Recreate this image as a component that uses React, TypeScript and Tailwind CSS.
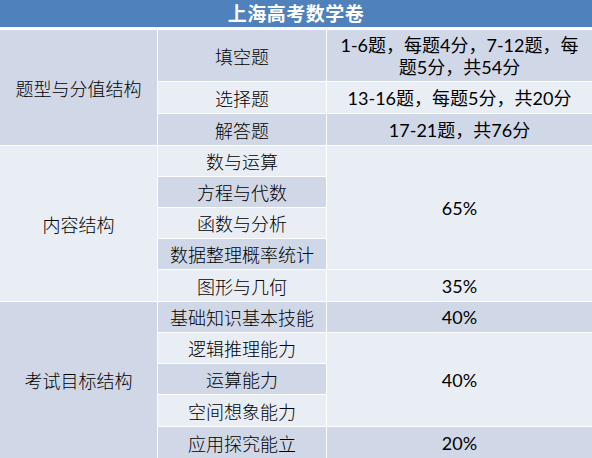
const DARK = 'bg-[#d0d8e8]'
const LIGHT = 'bg-[#e9edf4]'

type Cell = {
  text: React.ReactNode
  place: string
  bg: string
  mixed?: boolean
}

const cells: Cell[] = [
  // 题型与分值结构
  { text: '题型与分值结构', place: 'col-start-1 row-start-1 row-span-3', bg: DARK },
  { text: '填空题', place: 'col-start-2 row-start-1', bg: DARK },
  {
    text: (
      <>
        1-6题，每题4分，7-12题，每
        <br />
        题5分，共54分
      </>
    ),
    place: 'col-start-3 row-start-1',
    bg: DARK,
    mixed: true,
  },
  { text: '选择题', place: 'col-start-2 row-start-2', bg: LIGHT },
  { text: '13-16题，每题5分，共20分', place: 'col-start-3 row-start-2', bg: LIGHT, mixed: true },
  { text: '解答题', place: 'col-start-2 row-start-3', bg: DARK },
  { text: '17-21题，共76分', place: 'col-start-3 row-start-3', bg: DARK, mixed: true },

  // 内容结构
  { text: '内容结构', place: 'col-start-1 row-start-4 row-span-5', bg: LIGHT },
  { text: '数与运算', place: 'col-start-2 row-start-4', bg: LIGHT },
  { text: '65%', place: 'col-start-3 row-start-4 row-span-4', bg: LIGHT, mixed: true },
  { text: '方程与代数', place: 'col-start-2 row-start-5', bg: DARK },
  { text: '函数与分析', place: 'col-start-2 row-start-6', bg: LIGHT },
  { text: '数据整理概率统计', place: 'col-start-2 row-start-7', bg: DARK },
  { text: '图形与几何', place: 'col-start-2 row-start-8', bg: LIGHT },
  { text: '35%', place: 'col-start-3 row-start-8', bg: LIGHT, mixed: true },

  // 考试目标结构
  { text: '考试目标结构', place: 'col-start-1 row-start-9 row-span-5', bg: DARK },
  { text: '基础知识基本技能', place: 'col-start-2 row-start-9', bg: DARK },
  { text: '40%', place: 'col-start-3 row-start-9', bg: DARK, mixed: true },
  { text: '逻辑推理能力', place: 'col-start-2 row-start-10', bg: LIGHT },
  { text: '40%', place: 'col-start-3 row-start-10 row-span-3', bg: LIGHT, mixed: true },
  { text: '运算能力', place: 'col-start-2 row-start-11', bg: DARK },
  { text: '空间想象能力', place: 'col-start-2 row-start-12', bg: LIGHT },
  { text: '应用探究能立', place: 'col-start-2 row-start-13', bg: DARK },
  { text: '20%', place: 'col-start-3 row-start-13', bg: DARK, mixed: true },
]

export default function App() {
  return (
    <div className="w-[592px] h-[458px] bg-white flex flex-col overflow-hidden">
      <div className="h-[27px] bg-[#4f81bd] flex items-center justify-center text-white text-[19px] font-bold font-['Noto_Sans_CJK_SC',sans-serif] tracking-[0.5px]">
        上海高考数学卷
      </div>
      <div className="mt-[3px] grid grid-cols-[157px_168px_1fr] grid-rows-[51px_31px_31px_30px_30px_30px_30px_31px_30px_30px_30px_31px_31px] gap-px">
        {cells.map((c, i) => (
          <div
            key={i}
            className={`${c.place} ${c.bg} flex items-center justify-center text-center text-black text-[18px] leading-[22px] px-[8px] whitespace-nowrap ${
              c.mixed
                ? "font-['Lato','Noto_Sans_CJK_SC',sans-serif]"
                : "font-['Noto_Sans_CJK_SC',sans-serif] font-light"
            }`}
          >
            <div>{c.text}</div>
          </div>
        ))}
      </div>
    </div>
  )
}
